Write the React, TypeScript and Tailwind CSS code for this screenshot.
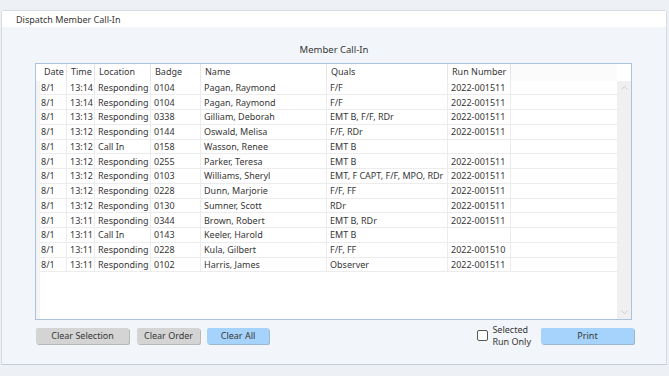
import React from "react";

type Row = [string, string, string, string, string, string, string];

const rows: Row[] = [
  ["8/1", "13:14", "Responding", "0104", "Pagan, Raymond", "F/F", "2022-001511"],
  ["8/1", "13:14", "Responding", "0104", "Pagan, Raymond", "F/F", "2022-001511"],
  ["8/1", "13:13", "Responding", "0338", "Gilliam, Deborah", "EMT B, F/F, RDr", "2022-001511"],
  ["8/1", "13:12", "Responding", "0144", "Oswald, Melisa", "F/F, RDr", "2022-001511"],
  ["8/1", "13:12", "Call In", "0158", "Wasson, Renee", "EMT B", ""],
  ["8/1", "13:12", "Responding", "0255", "Parker, Teresa", "EMT B", "2022-001511"],
  ["8/1", "13:12", "Responding", "0103", "Williams, Sheryl", "EMT, F CAPT, F/F, MPO, RDr", "2022-001511"],
  ["8/1", "13:12", "Responding", "0228", "Dunn, Marjorie", "F/F, FF", "2022-001511"],
  ["8/1", "13:12", "Responding", "0130", "Sumner, Scott", "RDr", "2022-001511"],
  ["8/1", "13:11", "Responding", "0344", "Brown, Robert", "EMT B, RDr", "2022-001511"],
  ["8/1", "13:11", "Call In", "0143", "Keeler, Harold", "EMT B", ""],
  ["8/1", "13:11", "Responding", "0228", "Kula, Gilbert", "F/F, FF", "2022-001510"],
  ["8/1", "13:11", "Responding", "0102", "Harris, James", "Observer", "2022-001511"],
];

const headers = ["Date", "Time", "Location", "Badge", "Name", "Quals", "Run Number"];
const widths = ["w-[27px]", "w-[28px]", "w-[56px]", "w-[50px]", "w-[126px]", "w-[121px]", "w-[63px]"];

export default function App() {
  return (
    <div
      className="h-[376px] w-[669px] overflow-hidden bg-[#edf1f6] pt-[10px] pl-[1px] pr-[2px] text-[#363636]"
      style={{ fontFamily: '"Noto Sans", "Open Sans", sans-serif' }}
    >
      <div className="flex h-[355px] flex-col rounded-t-[3px] border border-[#d6dbe2] border-b-[#c5ccd6] bg-[#f2f5f9]">
        <div className="flex h-[16px] items-center bg-white pl-[14px] text-[9px] leading-none">
          Dispatch Member Call-In
        </div>
        <div className="mt-[18px] text-center text-[9.5px] leading-none">Member Call-In</div>
        <div className="ml-[33px] mt-[8px] flex h-[257px] w-[597px] flex-col border border-[#a9c3de] bg-white">
          <div className="flex h-[17px] shrink-0 pl-[4px] pr-[14px] text-[9px]">
            {headers.map((h, i) => (
              <div key={h} className={`${widths[i]} flex items-center border-r border-[#e6e6e6] pl-[4px]`}>
                {h}
              </div>
            ))}
            <div className="flex-1 bg-[#fbfbfb]" />
          </div>
          <div className="flex flex-1">
            <div className="flex flex-1 flex-col border-l-[4px] border-[#f4f4f4]">
              {rows.map((r, ri) => (
                <div key={ri} className="flex h-[14.75px] border-b border-[#ececec] text-[9px] leading-none">
                  {r.map((c, i) => (
                    <div
                      key={i}
                      className={`${widths[i]} flex items-center whitespace-nowrap border-r border-[#ececec] ${i === 0 ? "pl-[1px]" : "pl-[3px]"}`}
                    >
                      {c}
                    </div>
                  ))}
                  <div className="flex-1" />
                </div>
              ))}
            </div>
            <div className="flex w-[14px] flex-col items-center justify-between bg-[#f0f0f0] py-[5px]">
              <svg width="7" height="4" viewBox="0 0 7 4">
                <path d="M0.5 3.5 L3.5 0.5 L6.5 3.5" fill="none" stroke="#c2c2c2" strokeWidth="0.8" />
              </svg>
              <svg width="7" height="4" viewBox="0 0 7 4">
                <path d="M0.5 0.5 L3.5 3.5 L6.5 0.5" fill="none" stroke="#c2c2c2" strokeWidth="0.8" />
              </svg>
            </div>
          </div>
        </div>
        <div className="ml-[34px] mt-[8px] flex h-[17px] items-start text-[9px]">
          <button className="h-[16px] w-[93px] rounded-[2px] bg-[#d4d4d4] shadow-[1px_1px_0_#b9b9b9] leading-none">
            Clear Selection
          </button>
          <button className="ml-[8px] h-[16px] w-[63px] rounded-[2px] bg-[#d4d4d4] shadow-[1px_1px_0_#b9b9b9] leading-none">
            Clear Order
          </button>
          <button className="ml-[7px] h-[16px] w-[62px] rounded-[2px] bg-[#a5d3fb] shadow-[1px_1px_0_#9ab8d4] leading-none">
            Clear All
          </button>
          <div className="flex-1" />
          <div className="mt-[-4px] flex items-center gap-[4px]">
            <div className="h-[11px] w-[11px] rounded-[2px] border border-[#555] bg-white" />
            <div className="text-[9px] leading-[12px]">
              <div>Selected</div>
              <div>Run Only</div>
            </div>
          </div>
          <button className="ml-[10px] mr-[32px] h-[16px] w-[93px] rounded-[2px] bg-[#a5d3fb] shadow-[1px_1px_0_#9ab8d4] leading-none">
            Print
          </button>
        </div>
      </div>
    </div>
  );
}
